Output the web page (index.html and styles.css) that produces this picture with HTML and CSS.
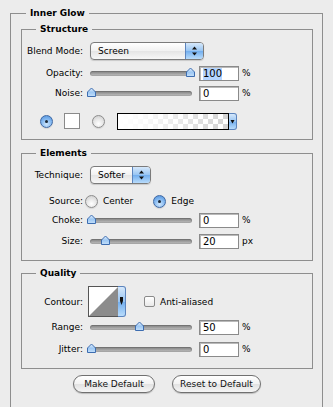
FILE: index.html
```html
<!DOCTYPE html>
<html lang="en">
<head>
    <meta charset="UTF-8">
    <title>Inner Glow</title>
    <link rel="stylesheet" href="styles.css">
</head>
<body>
    <div class="panel">
        <span class="title">Inner Glow</span>

        <div class="group structure">
            <span class="title">Structure</span>
            <div class="row first">
                <span class="lbl">Blend Mode:</span>
                <div class="select blend">
                    <span class="select-text">Screen</span>
                    <span class="stepper">
                        <svg width="7" height="10" viewBox="0 0 7 10"><path d="M3.5 0.5 L6 3.5 L1 3.5 Z M3.5 9.5 L6 6.5 L1 6.5 Z" fill="#111"/></svg>
                    </span>
                </div>
            </div>
            <div class="row gap4">
                <span class="lbl">Opacity:</span>
                <div class="slider"><span class="thumb" style="left:100px"></span></div>
                <input class="num selected" value="100">
                <span class="unit">%</span>
            </div>
            <div class="row gap2">
                <span class="lbl">Noise:</span>
                <div class="slider"><span class="thumb" style="left:1px"></span></div>
                <input class="num" value="0">
                <span class="unit">%</span>
            </div>
            <div class="row gap10 fills">
                <span class="radio on"></span>
                <span class="swatch"></span>
                <span class="radio"></span>
                <div class="gradient">
                    <span class="gradient-box"></span>
                    <span class="drop">
                        <svg width="5" height="5" viewBox="0 0 5 5"><path d="M0.5 1 L4.5 1 L2.5 4.5 Z" fill="#111"/></svg>
                    </span>
                </div>
            </div>
        </div>

        <div class="group elements">
            <span class="title">Elements</span>
            <div class="row first">
                <span class="lbl">Technique:</span>
                <div class="select technique">
                    <span class="select-text">Softer</span>
                    <span class="stepper">
                        <svg width="7" height="10" viewBox="0 0 7 10"><path d="M3.5 0.5 L6 3.5 L1 3.5 Z M3.5 9.5 L6 6.5 L1 6.5 Z" fill="#111"/></svg>
                    </span>
                </div>
            </div>
            <div class="row gap8">
                <span class="lbl tight">Source:</span>
                <span class="radio"></span>
                <span class="opt">Center</span>
                <span class="radio on spaced"></span>
                <span class="opt">Edge</span>
            </div>
            <div class="row gap1">
                <span class="lbl">Choke:</span>
                <div class="slider"><span class="thumb" style="left:1px"></span></div>
                <input class="num" value="0">
                <span class="unit">%</span>
            </div>
            <div class="row gap3">
                <span class="lbl">Size:</span>
                <div class="slider"><span class="thumb" style="left:15px"></span></div>
                <input class="num" value="20">
                <span class="unit">px</span>
            </div>
        </div>

        <div class="group quality">
            <span class="title">Quality</span>
            <div class="row first contour-row">
                <span class="lbl tight-c">Contour:</span>
                <div class="contour">
                    <span class="contour-box">
                        <svg width="29" height="29" viewBox="0 0 29 29"><path d="M0 29 L29 0 L29 29 Z" fill="#8c8c8c"/></svg>
                    </span>
                    <span class="drop tall">
                        <svg width="5" height="10" viewBox="0 0 5 10"><path d="M1 1 L4 1 L4 5 L2.5 9 L1 5 Z" fill="#111"/></svg>
                    </span>
                </div>
                <span class="check"></span>
                <span class="opt">Anti-aliased</span>
            </div>
            <div class="row gap1">
                <span class="lbl">Range:</span>
                <div class="slider"><span class="thumb" style="left:49px"></span></div>
                <input class="num" value="50">
                <span class="unit">%</span>
            </div>
            <div class="row gap4">
                <span class="lbl">Jitter:</span>
                <div class="slider"><span class="thumb" style="left:1px"></span></div>
                <input class="num" value="0">
                <span class="unit">%</span>
            </div>
        </div>

        <div class="buttons">
            <button class="btn make">Make Default</button>
            <button class="btn reset">Reset to Default</button>
        </div>
    </div>
</body>
</html>
```

FILE: styles.css
```css
body {
    margin: 0;
    background: #ececec;
    font-family: "DejaVu Sans", Verdana, sans-serif;
    font-size: 9px;
    color: #000;
    overflow: hidden;
}
.panel {
    position: relative;
    box-sizing: border-box;
    width: 313px;
    height: 410px;
    margin: 13px 0 0 10px;
    padding: 15px 9px 0 10px;
    border: 1px solid #8e8e8e;
    border-bottom: none;
}
.title {
    position: absolute;
    top: -7px;
    left: 15px;
    padding: 0 4px;
    line-height: 13px;
    font-weight: bold;
    background: #ececec;
}
.group {
    position: relative;
    box-sizing: border-box;
    width: 292px;
    border: 1px solid #8e8e8e;
}
.group .title {
    left: 14px;
}
.structure {
    height: 111px;
    padding-top: 12px;
}
.elements {
    height: 108px;
    margin-top: 13px;
    padding-top: 12px;
}
.quality {
    height: 96px;
    margin-top: 12px;
    padding-top: 12px;
}
.row {
    display: flex;
    align-items: center;
    height: 18px;
}
.gap1 { margin-top: 1px; }
.gap2 { margin-top: 2px; }
.gap3 { margin-top: 3px; }
.gap4 { margin-top: 4px; }
.gap8 { margin-top: 8px; }
.gap10 { margin-top: 10px; }
.lbl {
    width: 61px;
    margin-right: 7px;
    text-align: right;
    white-space: nowrap;
}
.lbl.tight {
    margin-right: 2px;
}
.lbl.tight-c {
    margin-right: 5px;
}
.opt {
    margin-left: 5px;
    white-space: nowrap;
}

/* popup select */
.select {
    box-sizing: border-box;
    height: 18px;
    display: flex;
    border: 1px solid #7b7b7b;
    border-radius: 4px;
    background: linear-gradient(#ffffff, #f1f1f1 50%, #e4e4e4 51%, #f7f7f7);
    box-shadow: 0 1px 1px rgba(0, 0, 0, 0.15);
    overflow: hidden;
}
.select.blend { width: 114px; }
.select.technique { width: 61px; }
.select-text {
    flex: 1;
    padding-left: 7px;
    line-height: 16px;
}
.stepper {
    width: 17px;
    display: flex;
    align-items: center;
    justify-content: center;
    border-left: 1px solid #5c84bd;
    background: linear-gradient(#d6e8fb, #97c4f2 50%, #72aeee 51%, #b9dcfb);
}

/* slider */
.slider {
    position: relative;
    width: 102px;
    height: 5px;
    border-radius: 3px;
    background: linear-gradient(#7c7c7c, #a7a7a7 60%, #c4c4c4);
    box-shadow: inset 0 0 0 1px rgba(0, 0, 0, 0.12);
}
.thumb {
    position: absolute;
    top: -4px;
    width: 11px;
    height: 10px;
    margin-left: -5px;
    background: url("data:image/svg+xml,%3Csvg xmlns='http://www.w3.org/2000/svg' width='11' height='10'%3E%3Cdefs%3E%3ClinearGradient id='g' x1='0' y1='0' x2='0' y2='1'%3E%3Cstop offset='0' stop-color='%23e6f1fd'/%3E%3Cstop offset='0.5' stop-color='%239cc7f3'/%3E%3Cstop offset='1' stop-color='%23c4e0fb'/%3E%3C/linearGradient%3E%3C/defs%3E%3Cpath d='M1.5 9.5 L1.5 5 L5.5 1 L9.5 5 L9.5 9.5 Z' fill='url(%23g)' stroke='%233d6db0'/%3E%3C/svg%3E") no-repeat;
}
.num {
    box-sizing: border-box;
    width: 40px;
    height: 15px;
    margin: 0 0 0 7px;
    padding: 0 0 0 3px;
    border: 1px solid #8a8a8a;
    box-shadow: inset 1px 1px 0 #b9b9b9;
    background: #fff;
    font-family: inherit;
    font-size: 10px;
    color: #000;
    outline: none;
}
.num.selected {
    background: linear-gradient(to right, #fff 3px, #b5d5ff 3px, #b5d5ff 22px, #fff 22px);
}
.unit {
    margin-left: 3px;
}

/* radios and swatches */
.radio {
    box-sizing: border-box;
    width: 13px;
    height: 13px;
    border-radius: 50%;
    border: 1px solid #8d8d8d;
    background: radial-gradient(circle at 50% 70%, #ffffff, #e6e6e6 50%, #c8c8c8);
    box-shadow: 0 1px 1px rgba(0, 0, 0, 0.1);
}
.radio.on {
    position: relative;
    border-color: #3f68a3;
    background: radial-gradient(circle at 50% 75%, #cfe6fc, #7fb5ef 55%, #4e8ed8);
}
.radio.on::after {
    content: "";
    position: absolute;
    left: 4px;
    top: 4px;
    width: 3px;
    height: 3px;
    border-radius: 50%;
    background: #1c2a3a;
}
.radio.spaced {
    margin-left: 20px;
}
.fills .radio.on {
    margin-left: 18px;
}
.swatch {
    box-sizing: border-box;
    width: 16px;
    height: 16px;
    margin-left: 11px;
    border: 1px solid #8a8a8a;
    background: #fff;
}
.fills .radio:not(.on) {
    margin-left: 12px;
}
.gradient {
    display: flex;
    height: 17px;
    margin-left: 12px;
}
.gradient-box {
    box-sizing: border-box;
    width: 112px;
    border: 1px solid #000;
    background:
        linear-gradient(to right, #fff, rgba(255, 255, 255, 0.85) 25%, rgba(255, 255, 255, 0)),
        repeating-conic-gradient(#d2d2d2 0 25%, #fff 0 50%) 0 0 / 10px 10px;
}
.drop {
    box-sizing: border-box;
    width: 8px;
    display: flex;
    align-items: center;
    justify-content: center;
    border: 1px solid #5c84bd;
    border-left: none;
    border-radius: 0 3px 3px 0;
    background: linear-gradient(#d6e8fb, #97c4f2 50%, #72aeee 51%, #b9dcfb);
}

/* contour */
.contour-row {
    height: 31px;
}
.contour {
    display: flex;
    height: 31px;
}
.contour-box {
    box-sizing: border-box;
    width: 30px;
    height: 31px;
    border: 1px solid #555;
    border-right: none;
    background: #fff;
}
.contour-box svg {
    display: block;
}
.drop.tall {
    width: 8px;
    align-items: flex-start;
    padding-top: 9px;
}
.check {
    box-sizing: border-box;
    width: 11px;
    height: 11px;
    margin-left: 18px;
    border: 1px solid #8a8a8a;
    border-radius: 2px;
    background: linear-gradient(#ffffff, #e9e9e9);
}

/* buttons */
.buttons {
    display: flex;
    justify-content: center;
    gap: 17px;
    margin-top: 6px;
}
.btn {
    box-sizing: border-box;
    height: 18px;
    padding: 0;
    border: 1px solid #707070;
    border-radius: 9px;
    background: linear-gradient(#ffffff, #f2f2f2 50%, #e2e2e2 51%, #f5f5f5);
    box-shadow: 0 1px 1px rgba(0, 0, 0, 0.2);
    font-family: inherit;
    font-size: 9px;
    color: #111;
}
.btn.make { width: 82px; }
.btn.reset { width: 89px; }
```
